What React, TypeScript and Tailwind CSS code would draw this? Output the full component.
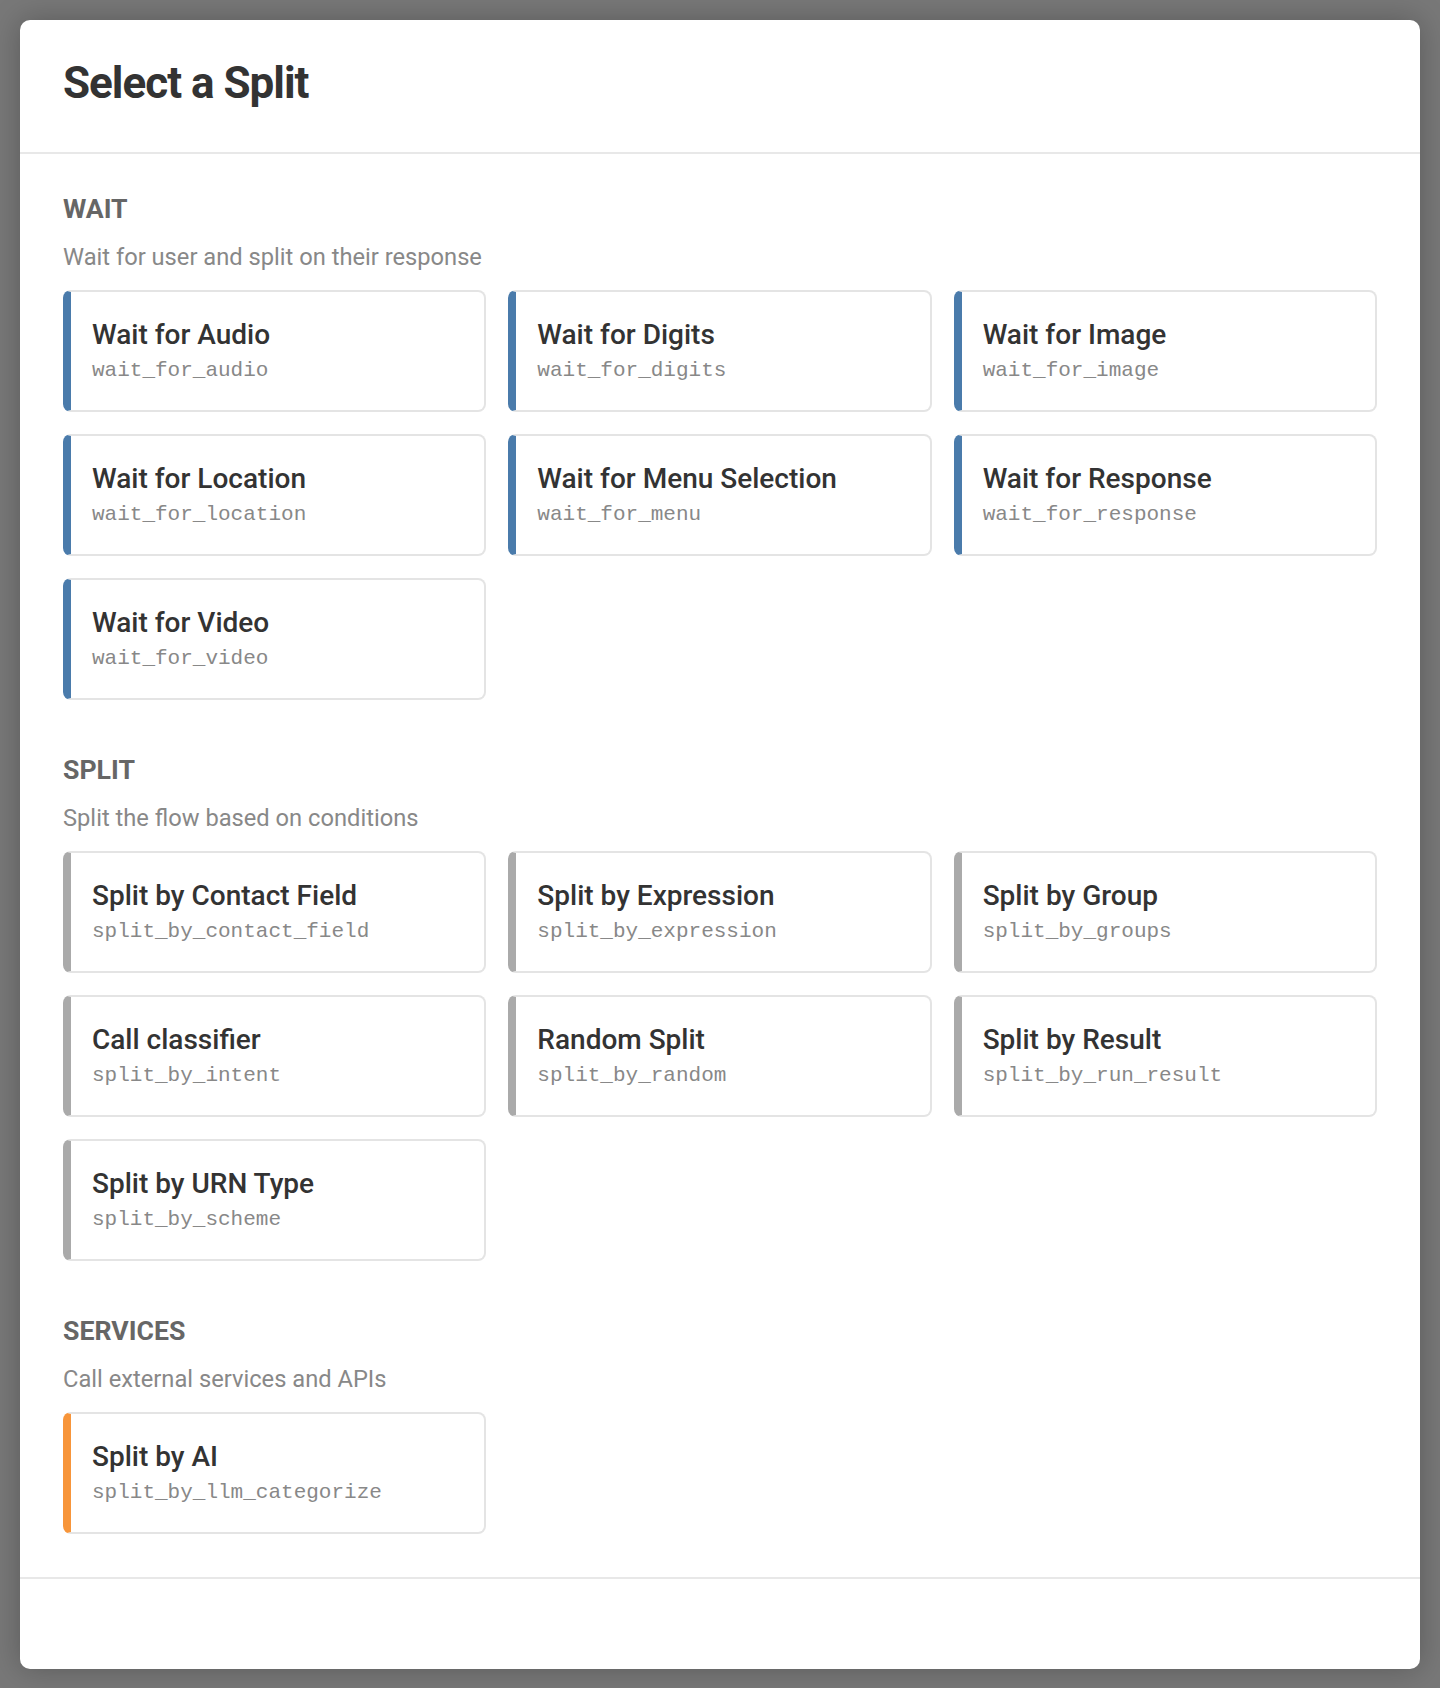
import React from "react";

type Item = { title: string; code: string };

const sections: {
  name: string;
  desc: string;
  bar: string;
  items: Item[];
}[] = [
  {
    name: "WAIT",
    desc: "Wait for user and split on their response",
    bar: "border-l-[#4a7bab]",
    items: [
      { title: "Wait for Audio", code: "wait_for_audio" },
      { title: "Wait for Digits", code: "wait_for_digits" },
      { title: "Wait for Image", code: "wait_for_image" },
      { title: "Wait for Location", code: "wait_for_location" },
      { title: "Wait for Menu Selection", code: "wait_for_menu" },
      { title: "Wait for Response", code: "wait_for_response" },
      { title: "Wait for Video", code: "wait_for_video" },
    ],
  },
  {
    name: "SPLIT",
    desc: "Split the flow based on conditions",
    bar: "border-l-[#aaaaaa]",
    items: [
      { title: "Split by Contact Field", code: "split_by_contact_field" },
      { title: "Split by Expression", code: "split_by_expression" },
      { title: "Split by Group", code: "split_by_groups" },
      { title: "Call classifier", code: "split_by_intent" },
      { title: "Random Split", code: "split_by_random" },
      { title: "Split by Result", code: "split_by_run_result" },
      { title: "Split by URN Type", code: "split_by_scheme" },
    ],
  },
  {
    name: "SERVICES",
    desc: "Call external services and APIs",
    bar: "border-l-[#f7953a]",
    items: [{ title: "Split by AI", code: "split_by_llm_categorize" }],
  },
];

function Card({ item, bar }: { item: Item; bar: string }) {
  return (
    <div
      className={`bg-white rounded-[8px] border-2 border-[#e4e4e4] border-l-[8px] ${bar} pl-[21px] pr-4 pt-[27px] pb-[25px] cursor-pointer`}
    >
      <div className="text-[28px] leading-[32px] font-medium text-[#333333]">
        {item.title}
      </div>
      <div
        className="mt-[6px] text-[21px] leading-[28px] text-[#888888]"
        style={{ fontFamily: '"Liberation Mono", "Courier New", monospace' }}
      >
        {item.code}
      </div>
    </div>
  );
}

export default function App() {
  return (
    <div
      className="min-h-screen bg-[#787878] p-5"
      style={{ fontFamily: 'Roboto, "Noto Sans", sans-serif' }}
    >
      <div className="bg-white rounded-[10px] shadow-[0_0_30px_rgba(0,0,0,0.25)] flex flex-col">
        {/* Header */}
        <div className="px-[43px] pt-[37px] pb-[43px] border-b-2 border-[#e8e8e8]">
          <h1 className="text-[44px] leading-[52px] font-bold tracking-[-1px] text-[#333333]">
            Select a Split
          </h1>
        </div>

        {/* Body */}
        <div className="px-[43px] pt-[39px] pb-[43px] flex flex-col gap-[54px]">
          {sections.map((s) => (
            <div key={s.name}>
              <h2 className="text-[26.67px] leading-[32px] font-bold text-[#666666]">
                {s.name}
              </h2>
              <p className="mt-[16px] text-[23.7px] leading-[32px] text-[#888888]">
                {s.desc}
              </p>
              <div className="mt-[17px] grid grid-cols-3 gap-[22px]">
                {s.items.map((it) => (
                  <Card key={it.code} item={it} bar={s.bar} />
                ))}
              </div>
            </div>
          ))}
        </div>

        {/* Footer */}
        <div className="h-[92px] border-t-2 border-[#e8e8e8]"></div>
      </div>
    </div>
  );
}
